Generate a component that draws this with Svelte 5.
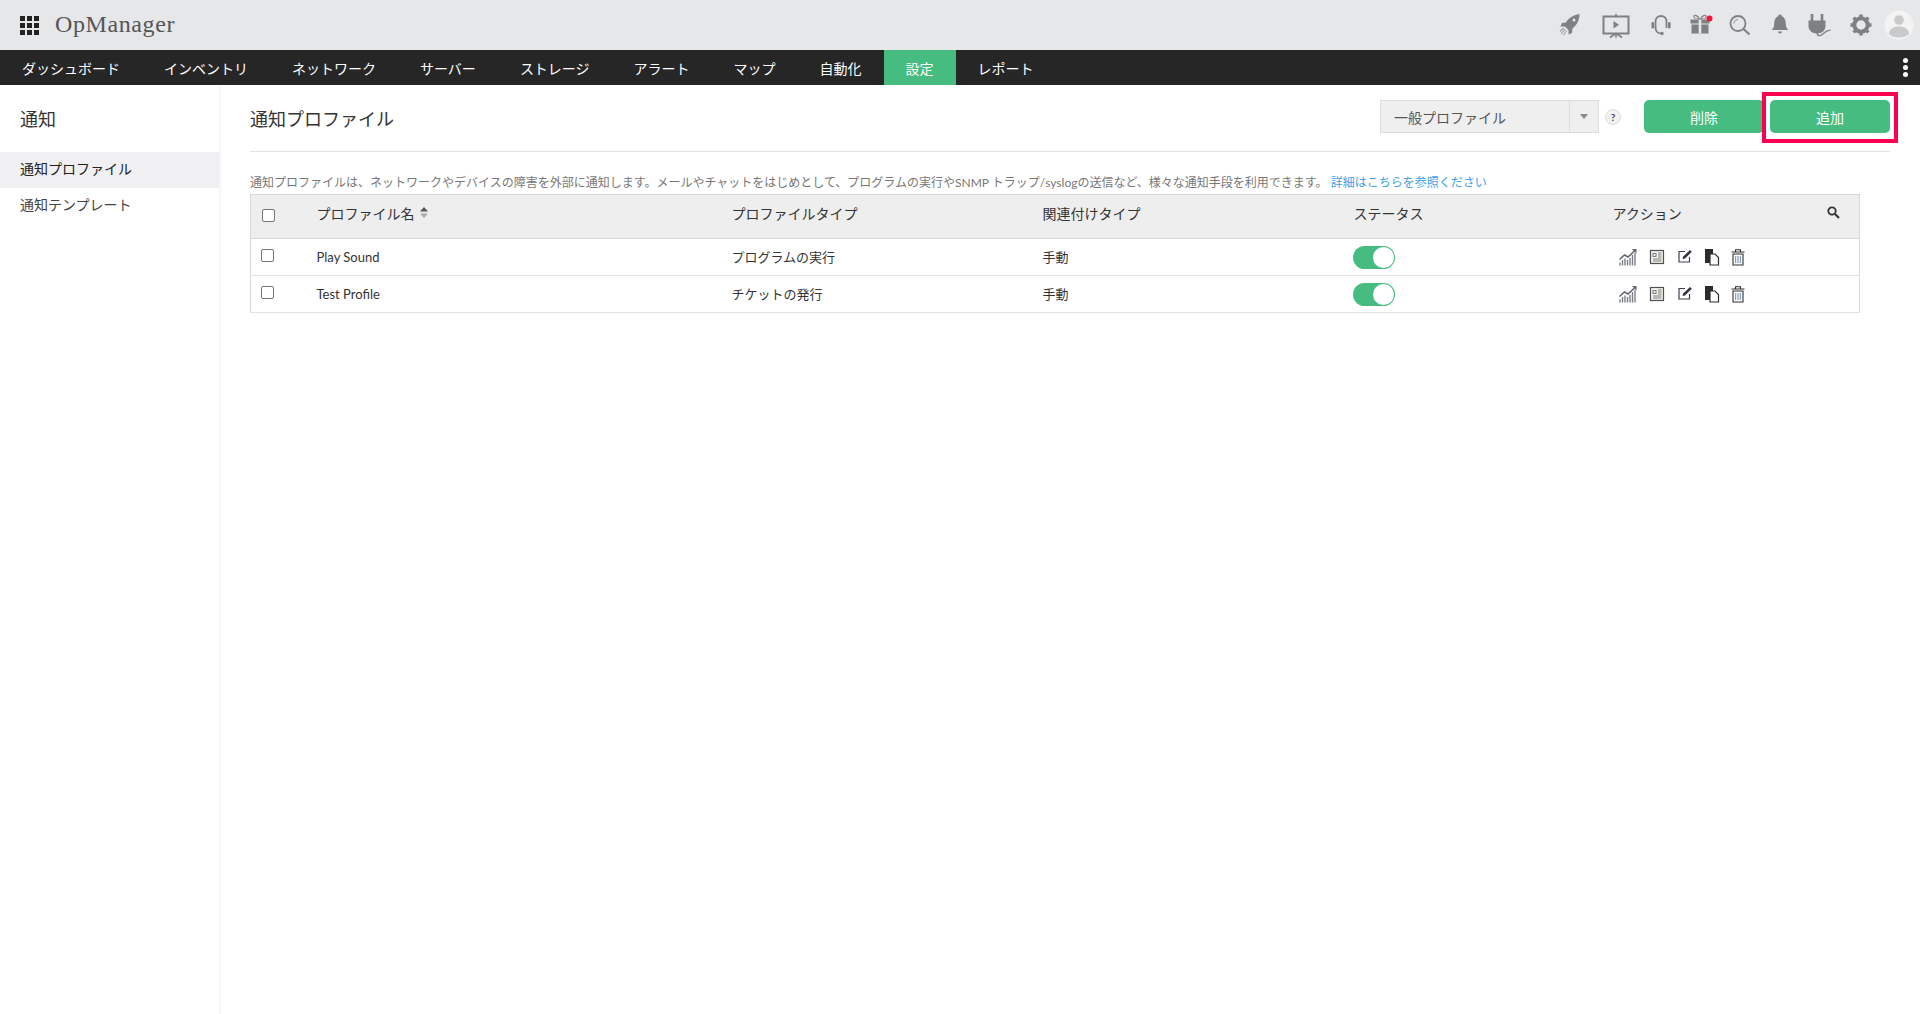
<script>
  const navItems = ['ダッシュボード','インベントリ','ネットワーク','サーバー','ストレージ','アラート','マップ','自動化','設定','レポート'];
  const rows = [
    { name: 'Play Sound', type: 'プログラムの実行', assoc: '手動' },
    { name: 'Test Profile', type: 'チケットの発行', assoc: '手動' }
  ];
</script>

<div class="page">
  <header class="top">
    <div class="brand">
      <div class="apps">{#each Array(9) as _}<i></i>{/each}</div>
      <span class="logo">OpManager</span>
    </div>
    <div class="tools">
      <svg width="44" height="30" viewBox="-22 -15 44 30"><path d="M9.500-11C3-10-2-6.500-4-2.500L-8-2-9.500 1.500H-5L-1.500 5V9.500L2 8 2.500 3.500C7 0 9.500-5 9.500-11z" fill="#7e8082"/><circle cx="4" cy="-5" r="1.500" fill="#e6e7e9"/><path d="M-5 4-9 9M-3.500 5.500-6.500 10M-6.500 3-10 6.500" stroke="#a0a2a4" stroke-width="1.200" fill="none"/></svg>
      <svg width="48" height="30" viewBox="-24 -15 48 30"><path d="M-12.500-8.500h25v17h-25z" fill="none" stroke="#7e8082" stroke-width="2"/><path d="M-2.500-4v7.500L3-.300z" fill="#7e8082"/><path d="M0-11v2.500M0 8.500v4M-1 9l-5 3.500M1 9l5 3.500" stroke="#7e8082" stroke-width="1.600" fill="none"/></svg>
      <svg width="42" height="30" viewBox="-21 -15 42 30"><path d="M-5.500 3V-3.500C-5.500-6.800-3-9 0-9s5.500 2.200 5.500 5.500V3" fill="none" stroke="#7e8082" stroke-width="1.800"/><path d="M-5.500 2c0 4.500 1.500 6.500 5.500 6.500" fill="none" stroke="#7e8082" stroke-width="1.600"/><circle cx="1" cy="8.500" r="1.700" fill="#7e8082"/><rect x="-9.500" y="-3" width="2.600" height="6.500" rx="1.200" fill="#7e8082"/><rect x="7" y="-3" width="2.600" height="6.500" rx="1.200" fill="#7e8082"/></svg>
      <svg width="36" height="30" viewBox="-18 -15 36 30"><path d="M-9.500-5.500h19v4h-19zM-8.500-.500h17V8.500h-17z" fill="#7e8082"/><path d="M-1.300-5.500h2.600V8.500h-2.600z" fill="#e6e7e9"/><path d="M-.500-6c-2-4-6-5-5.500-2 .3 1.500 3 2 5.500 2zM.500-6c2-4 6-5 5.500-2-.3 1.500-3 2-5.500 2z" fill="none" stroke="#7e8082" stroke-width="1.200"/><circle cx="9.500" cy="-6.500" r="3" fill="#f5143c"/></svg>
      <svg width="44" height="30" viewBox="-22 -15 44 30"><circle cx="-2" cy="-1.500" r="7.500" fill="none" stroke="#7e8082" stroke-width="1.800"/><path d="M-6-1.500c0-2.200 1.800-4 4-4" fill="none" stroke="#9a9c9e" stroke-width="1.200"/><path d="M3.500 4 9.500 9.500" stroke="#7e8082" stroke-width="2.200"/></svg>
      <svg width="36" height="30" viewBox="-18 -15 36 30"><path d="M0-10.500c-1.200 0-1.800.8-1.800 1.800C-5-7.500-5.800-4-5.800-1c0 3-1 4.500-2.400 6H8.200C6.800 3.500 5.800 2 5.800-1c0-3-.8-6.500-4-7.700C1.800-9.700 1.200-10.500 0-10.500z" fill="#7e8082"/><path d="M-2 6.500a2 2 0 0 0 4 0z" fill="#7e8082"/></svg>
      <svg width="40" height="30" viewBox="-20 -15 40 30"><path d="M-9.500-4.500H7.500V1C7.500 5.500 4 8.500-1 8.500S-9.500 5.500-9.500 1z" fill="#7e8082"/><path d="M-6-11v7M4-11v7" stroke="#7e8082" stroke-width="2.600"/><path d="M-1 8C0 12.500 3.500 10.500 6 8s4-2.800 6.500-2.800" fill="none" stroke="#7e8082" stroke-width="1.300"/></svg>
      <svg width="46" height="30" viewBox="-23 -15 46 30"><circle r="6.700" fill="none" stroke="#7e8082" stroke-width="4"/><g stroke="#7e8082" stroke-width="3.400"><path d="M0-10.500v4M0 6.500v4M-10.500 0h4M6.500 0h4M-7.400-7.400-4.600-4.600M4.600 4.600 7.400 7.400M7.400-7.400 4.600-4.600M-4.600 4.600-7.400 7.400"/></g></svg>
      <svg class="avatar" width="30" height="30" viewBox="-15 -15 30 30"><circle r="14.500" fill="#f3f3f4"/><circle cy="-5" r="4.800" fill="#c9cacb"/><path d="M-10 9c0-5 4.500-7.500 10-7.500S10 4 10 9c-2.500 2.500-6 3.500-10 3.500S-7.500 11.500-10 9z" fill="#c9cacb"/></svg>
    </div>
  </header>

  <nav class="nav">
    <div class="items">
      {#each navItems as item}
        <span class="item" class:on={item === '設定'}>{item}</span>
      {/each}
    </div>
    <div class="kebab"><i></i><i></i><i></i></div>
  </nav>

  <div class="body">
    <aside class="side">
      <h2>通知</h2>
      <div class="link active">通知プロファイル</div>
      <div class="link">通知テンプレート</div>
    </aside>

    <main class="main">
      <div class="head">
        <h1>通知プロファイル</h1>
        <div class="controls">
          <div class="select"><span class="val">一般プロファイル</span><span class="caret"><b></b></span></div>
          <span class="help">?</span>
          <button class="btn del">削除</button>
          <button class="btn add">追加<span class="mark"></span></button>
        </div>
      </div>

      <p class="desc">通知プロファイルは、ネットワークやデバイスの障害を外部に通知します。メールやチャットをはじめとして、プログラムの実行やSNMP トラップ/syslogの送信など、様々な通知手段を利用できます。 <a href="#top">詳細はこちらを参照ください</a></p>

      <table>
        <colgroup><col class="c0"/><col class="c1"/><col class="c2"/><col class="c3"/><col class="c4"/><col/></colgroup>
        <thead>
          <tr>
            <th><span class="cb big"></span></th>
            <th>プロファイル名 <svg class="sort" width="8" height="11" viewBox="0 0 8 11"><path d="M4 0 8 4.500H0z" fill="#555"/><path d="M4 11 0 6.500h8z" fill="#aaa"/></svg></th>
            <th>プロファイルタイプ</th>
            <th>関連付けタイプ</th>
            <th>ステータス</th>
            <th>
              <div class="act-head">アクション
                <svg width="13" height="13" viewBox="0 0 13 13"><circle cx="5" cy="5" r="3.700" fill="none" stroke="#333" stroke-width="1.800"/><path d="M8 8l4 4" stroke="#333" stroke-width="2.200"/></svg>
              </div>
            </th>
          </tr>
        </thead>
        <tbody>
          {#each rows as r}
            <tr>
              <td><span class="cb"></span></td>
              <td>{r.name}</td>
              <td>{r.type}</td>
              <td>{r.assoc}</td>
              <td><span class="toggle"><i></i></span></td>
              <td>
                <div class="actions">
                  <svg width="28" height="18" viewBox="-14 -9 28 18"><path d="M-8.500 2.500-3.500-2 0 0 6.500-6" fill="none" stroke="#60656c" stroke-width="1.500"/><path d="M4-8h4.500v4.500z" fill="#60656c"/><path d="M-8 8.500V5.500M-5.500 8.500V3M-3 8.500V1.500M-.5 8.500V3M2 8.500V1M4.500 8.500V-2M7 8.500V-4" stroke="#7c8086" stroke-width="1.400"/></svg>
                  <svg width="28" height="18" viewBox="-15 -9 28 18"><rect x="-6.500" y="-6.500" width="13" height="13" fill="#f6f3ea" stroke="#4d4f55" stroke-width="1.200"/><path d="M-4-3.500h3v3h-3zM1-4h3.500M1-2h3.500M1 0h3.500M-4 2h8.500M-4 4h8.500" fill="none" stroke="#7c7f84" stroke-width="1.100"/></svg>
                  <svg width="28" height="18" viewBox="-14 -9 28 18"><path d="M1-5.500h-6v10.500H5.500V0" fill="none" stroke="#4a3a50" stroke-width="1.200"/><path d="M6-7 7.800-5.200 1 1.500-1.500 2-.8-.5z" fill="#35343a"/></svg>
                  <svg width="28" height="18" viewBox="-14 -9 28 18"><path d="M-7-8H1V6h-8z" fill="#2f2b2c"/><path d="M-2-3H3L6.500.5V8H-2z" fill="#fff" stroke="#2f2b2c" stroke-width="1.200"/></svg>
                  <svg width="28" height="18" viewBox="-12 -9 28 18"><path d="M-6.500-5h13M-2.500-5v-2.300h5V-5" fill="none" stroke="#2f2f35" stroke-width="1.100"/><path d="M-5-3h10V8H-5z" fill="#fff" stroke="#2f2f35" stroke-width="1.100"/><path d="M-2.300-1v7M0-1v7M2.300-1v7" stroke="#5b7da0" stroke-width=".9"/></svg>
                </div>
              </td>
            </tr>
          {/each}
        </tbody>
      </table>
    </main>
  </div>
</div>

<style>
  :global(body) { margin: 0; background: #fff; }
  .page { width: 1920px; height: 1014px; overflow: hidden; display: flex; flex-direction: column; font-family: Lato, "Noto Sans CJK JP", sans-serif; color: #333; }

  .top { height: 50px; background: #e6e7e9; display: flex; justify-content: space-between; align-items: center; padding: 0 6px 0 20px; flex: none; }
  .brand { display: flex; align-items: center; gap: 16px; }
  .apps { display: grid; grid-template-columns: repeat(3, 5px); grid-auto-rows: 5px; gap: 2px; }
  .apps i { background: #222; }
  .logo { font-family: "Liberation Serif", serif; font-size: 24px; letter-spacing: .6px; color: #555; margin-top: -2px; }
  .tools { display: flex; align-items: center; }
  .tools svg { display: block; }

  .nav { height: 35px; background: #262626; display: flex; justify-content: space-between; align-items: center; flex: none; padding-right: 12px; }
  .items { display: flex; height: 100%; }
  .item { padding: 0 22px; line-height: 37px; color: #fff; font-size: 14px; }
  .item.on { background: #46bc80; }
  .kebab { display: flex; flex-direction: column; gap: 2px; }
  .kebab i { width: 5px; height: 5px; border-radius: 50%; background: #fff; }

  .body { flex: 1; display: flex; min-height: 0; }
  .side { width: 219px; flex: none; box-shadow: 1px 0 4px rgba(0,0,0,.07); }
  .side h2 { margin: 0; padding: 21px 20px 0; height: 46px; font-size: 18px; font-weight: 400; line-height: 26px; color: #333; }
  .link { height: 36px; line-height: 34px; padding-left: 20px; font-size: 14px; color: #444; }
  .link.active { background: #f0f0f2; color: #222; }

  .main { flex: 1; padding: 15px 30px 0 31px; }
  .head { height: 51px; border-bottom: 1px solid #e2e2e2; display: flex; justify-content: space-between; }
  h1 { margin: 0; font-size: 18px; font-weight: 400; line-height: 38px; color: #333; }
  .controls { display: flex; align-items: flex-start; }
  .select { width: 219px; height: 33px; box-sizing: border-box; border: 1px solid #dcdcdc; background: #efefef; display: flex; font-size: 14px; color: #555; line-height: 33px; }
  .val { flex: 1; padding-left: 13px; }
  .caret { width: 28px; border-left: 1px solid #dcdcdc; display: flex; align-items: center; justify-content: center; }
  .caret b { width: 0; height: 0; border: 4px solid transparent; border-top: 5px solid #888; border-bottom: 0; }
  .help { width: 14px; height: 14px; margin: 9px 0 0 6px; border-radius: 50%; background: #f2f2f2; border: 1px solid #ddd; font-size: 10px; font-weight: 700; line-height: 14px; text-align: center; color: #444; }
  .btn { height: 33px; width: 120px; border: 0; border-radius: 5px; background: #46bc80; color: #fff; font-family: inherit; font-size: 14px; padding: 0; position: relative; }
  .del { margin-left: 23px; }
  .add { margin-left: 6px; }
  .mark { position: absolute; left: -8px; right: -8px; top: -8px; bottom: -10px; border: 4px solid #ff0050; pointer-events: none; }

  .desc { margin: 22px 0 2px; font-size: 12px; line-height: 18px; color: #777; white-space: nowrap; }
  .desc a { color: #3f9fe8; text-decoration: none; }

  table { width: 1610px; border-collapse: collapse; table-layout: fixed; border: 1px solid #d8d8d8; }
  .c0 { width: 66px; } .c1 { width: 415px; } .c2 { width: 311px; } .c3 { width: 311px; } .c4 { width: 259px; }
  th { height: 37px; padding: 0 0 6px; background: #eee; border-bottom: 1px solid #d8d8d8; font-size: 14px; line-height: 18px; font-weight: 400; text-align: left; color: #333; }
  td { height: 36px; padding: 0; border-bottom: 1px solid #e2e2e2; font-size: 13px; line-height: 18px; color: #333; }
  th:first-child, td:first-child { padding-left: 10px; }
  .cb { display: block; width: 11px; height: 11px; border: 1px solid #767676; border-radius: 2px; background: #fff; margin-bottom: 3px; }
  .cb.big { margin: 4px 0 0 1px; }
  .sort { vertical-align: 1px; margin-left: 2px; }
  .act-head { display: flex; justify-content: space-between; align-items: center; padding-right: 19px; }
  .act-head svg { margin-top: -3px; }
  .toggle { display: block; width: 42px; height: 23px; border-radius: 12px; background: #46bc80; position: relative; margin-left: -1px; }
  .toggle i { position: absolute; right: 1px; top: 1px; width: 21px; height: 21px; border-radius: 50%; background: #fff; }
  .actions { display: flex; padding-left: 1px; }
  .actions svg { display: block; }
</style>
